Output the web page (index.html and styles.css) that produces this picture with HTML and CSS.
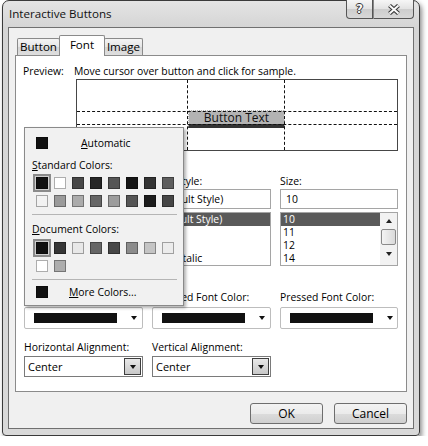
FILE: index.html
```html
<!DOCTYPE html>
<html>
<head>
<meta charset="utf-8">
<title>Interactive Buttons</title>
<link rel="stylesheet" href="styles.css">
</head>
<body>
<div class="window">
  <div class="titlebar">
    <div class="title">Interactive Buttons</div>
    <div class="caps">
      <div class="cap help"><span class="qmark">?</span></div>
      <div class="cap close">
        <svg width="14" height="11" viewBox="0 0 14 11"><path d="M2.5 1.5 L11.5 9.5 M11.5 1.5 L2.5 9.5" stroke="#3a3a3a" stroke-width="4.2" fill="none"/><path d="M2.5 1.5 L11.5 9.5 M11.5 1.5 L2.5 9.5" stroke="#fafafa" stroke-width="2" fill="none"/></svg>
      </div>
    </div>
  </div>
  <div class="client">
    <div class="tabs">
      <div class="tab t-button">Button</div>
      <div class="tab t-font active">Font</div>
      <div class="tab t-image">Image</div>
    </div>
    <div class="panel">
      <div class="preview">
        <div class="pv-label">Preview:</div>
        <div class="pv-hint">Move cursor over button and click for sample.</div>
        <div></div>
        <div class="pv-box">
          <div class="sample">Button Text</div>
          <div class="vline v1"></div>
          <div class="vline v2"></div>
          <div class="hline h1"></div>
          <div class="hline h2"></div>
        </div>
      </div>

      <div class="fields fonts">
        <div class="field">
          <div class="lbl"></div>
          <div class="input"></div>
          <div class="list"></div>
        </div>
        <div class="field">
          <div class="lbl">Font Style:</div>
          <div class="input">(Default Style)</div>
          <div class="list">
            <div class="item sel">(Default Style)</div>
            <div class="item">Bold</div>
            <div class="item">Italic</div>
            <div class="item">Bold Italic</div>
          </div>
        </div>
        <div class="field">
          <div class="lbl">Size:</div>
          <div class="input size-in">10</div>
          <div class="list with-scroll">
            <div class="items">
              <div class="item sel">10</div>
              <div class="item">11</div>
              <div class="item">12</div>
              <div class="item">14</div>
            </div>
            <div class="scroll">
              <div class="sb-arrow up"></div>
              <div class="sb-thumb"></div>
              <div class="sb-arrow down"></div>
            </div>
          </div>
        </div>
      </div>

      <div class="fields colors">
        <div class="field">
          <div class="lbl"></div>
          <div class="cdrop"><span class="bar"></span><span class="arrow"></span></div>
        </div>
        <div class="field">
          <div class="lbl">Hovered Font Color:</div>
          <div class="cdrop"><span class="bar"></span><span class="arrow"></span></div>
        </div>
        <div class="field">
          <div class="lbl">Pressed Font Color:</div>
          <div class="cdrop"><span class="bar"></span><span class="arrow"></span></div>
        </div>
      </div>

      <div class="fields aligns">
        <div class="field">
          <div class="lbl">Horizontal Alignment:</div>
          <div class="select"><span>Center</span><span class="dbtn"><span class="arrow"></span></span></div>
        </div>
        <div class="field">
          <div class="lbl">Vertical Alignment:</div>
          <div class="select"><span>Center</span><span class="dbtn"><span class="arrow"></span></span></div>
        </div>
      </div>

      <div class="popup">
        <div class="auto"><span class="sw" style="background:#111"></span><span class="auto-text"><span class="ul">A</span>utomatic</span></div>
        <div class="plabel"><span class="ul">S</span>tandard Colors:</div>
        <div class="swatches">
          <span class="sw selected" style="background:#111"></span>
          <span class="sw" style="background:#fff"></span>
          <span class="sw" style="background:#474747"></span>
          <span class="sw" style="background:#262626"></span>
          <span class="sw" style="background:#555"></span>
          <span class="sw" style="background:#151515"></span>
          <span class="sw" style="background:#333"></span>
          <span class="sw" style="background:#5e5e5e"></span>
          <span class="sw" style="background:#f2f2f2"></span>
          <span class="sw" style="background:#9a9a9a"></span>
          <span class="sw" style="background:#ababab"></span>
          <span class="sw" style="background:#666"></span>
          <span class="sw" style="background:#9c9c9c"></span>
          <span class="sw" style="background:#555"></span>
          <span class="sw" style="background:#1c1c1c"></span>
          <span class="sw" style="background:#464646"></span>
        </div>
        <div class="sep"></div>
        <div class="plabel"><span class="ul">D</span>ocument Colors:</div>
        <div class="swatches doc">
          <span class="sw selected" style="background:#111"></span>
          <span class="sw" style="background:#363636"></span>
          <span class="sw" style="background:#e8e8e8"></span>
          <span class="sw" style="background:#666"></span>
          <span class="sw" style="background:#474747"></span>
          <span class="sw" style="background:#8c8c8c"></span>
          <span class="sw" style="background:#c4c4c4"></span>
          <span class="sw" style="background:#ececec"></span>
          <span class="sw" style="background:#fff"></span>
          <span class="sw" style="background:#adadad"></span>
        </div>
        <div class="sep"></div>
        <div class="more"><span class="sw" style="background:#111"></span><span class="more-text"><span class="ul">M</span>ore Colors...</span></div>
      </div>
    </div>
    <div class="buttons">
      <div class="btn">OK</div>
      <div class="btn">Cancel</div>
    </div>
  </div>
</div>
</body>
</html>
```

FILE: styles.css
```css
* { box-sizing: border-box; }
html, body { margin: 0; padding: 0; background: #fff; }
body {
  font-family: "Open Sans", "Noto Sans", sans-serif;
  font-size: 10.4px;
  color: #000;
  padding-left: 2px;
}

.window {
  width: 418px;
  border: 1px solid #3a3a3a;
  border-radius: 7px 7px 4px 4px;
  background: linear-gradient(#e4e4e4, #d5d5d5 26px, #d9d9d9);
  padding: 0 5px 6px;
  box-shadow: 2px 3px 5px rgba(0,0,0,0.45);
}

.titlebar {
  height: 26px;
  display: flex;
  align-items: flex-start;
}
.title {
  flex: 1;
  font-size: 11.6px;
  line-height: 16px;
  padding: 5px 0 0 1px;
  color: #111;
}
.caps { display: flex; margin-top: -1px; }
.cap {
  height: 19px;
  border: 1px solid #555;
  border-top: none;
  background: linear-gradient(#f6f6f6, #e2e2e2 50%, #cdcdcd 51%, #d8d8d8);
  display: flex;
  align-items: center;
  justify-content: center;
}
.cap.help { width: 27px; border-radius: 0 0 0 4px; }
.cap.close { width: 41px; border-left: 1px solid #888; border-radius: 0 0 4px 0; }
.qmark {
  font-family: "DejaVu Sans", sans-serif;
  font-weight: bold;
  font-size: 12px;
  line-height: 12px;
  color: #fafafa;
  text-shadow: 1px 0 0 #333, -1px 0 0 #333, 0 1px 0 #333, 0 -1px 0 #333;
}

.client {
  border: 1px solid #707070;
  background: #f0f0f0;
  padding: 7px 6px 4px;
}

.tabs {
  display: flex;
  align-items: flex-end;
  height: 20px;
  padding-left: 2px;
  position: relative;
  z-index: 2;
}
.tab {
  height: 17px;
  border: 1px solid #8a8a8a;
  border-bottom: none;
  border-radius: 2px 2px 0 0;
  background: linear-gradient(#f4f4f4, #e6e6e6 50%, #d6d6d6 51%, #dedede);
  font-size: 11.6px;
  line-height: 16px;
  text-align: center;
}
.t-button { width: 43px; }
.t-font { width: 46px; margin-left: -1px; }
.t-image { width: 39px; margin-left: -1px; }
.tab.active {
  height: 21px;
  margin-bottom: -1px;
  background: #fff;
  line-height: 18px;
  position: relative;
  z-index: 3;
}

.panel {
  position: relative;
  height: 337px;
  border: 1px solid #8b8b8b;
  background: #fff;
  padding: 8px 7px 0 8px;
}

.preview {
  display: grid;
  grid-template-columns: 50px 324px;
}
.pv-label, .pv-hint { line-height: 15px; white-space: nowrap; }
.pv-label { margin-left: -1px; }
.pv-box {
  position: relative;
  margin-left: 2px;
  width: 322px;
  height: 72px;
  border: 1px solid #464646;
  background: #fff;
}
.sample {
  position: absolute;
  left: 111px;
  top: 30px;
  width: 97px;
  height: 18px;
  background: #b3b3b3;
  border: 1px dotted #f4f4f4;
  border-bottom: 4px solid #333;
  font-size: 12px;
  line-height: 13px;
  text-align: center;
  color: #111;
}
.vline {
  position: absolute;
  top: 0;
  bottom: 0;
  width: 0;
  border-left: 1px dashed #111;
}
.v1 { left: 110px; }
.v2 { left: 207px; }
.hline {
  position: absolute;
  left: 0;
  right: 0;
  height: 0;
  border-top: 1px dashed #111;
}
.h1 { top: 31px; }
.h2 { top: 44px; }

.fields {
  display: grid;
  grid-template-columns: 119px 119px 118px;
  column-gap: 9px;
}
.fonts { margin-top: 23px; }
.colors { margin-top: 24px; }
.aligns { margin-top: 11px; grid-template-columns: 119px 119px; }

.lbl { height: 15px; line-height: 15px; white-space: nowrap; }
.input {
  height: 20px;
  border: 1px solid #a5a5a5;
  line-height: 18px;
  padding-left: 3px;
  white-space: nowrap;
  overflow: hidden;
}
.size-in { padding-left: 5px; }
.list {
  margin-top: 3px;
  height: 54px;
  border: 1px solid #a5a5a5;
  overflow: hidden;
}
.item {
  height: 13px;
  line-height: 13px;
  padding-left: 2px;
  white-space: nowrap;
}
.item.sel { background: #5a5a5a; color: #fff; }
.with-scroll { display: flex; }
.items { flex: 1; }
.scroll {
  width: 17px;
  display: flex;
  flex-direction: column;
  align-items: center;
  background: #f2f2f2;
}
.sb-arrow {
  width: 0;
  height: 0;
  border-left: 3.5px solid transparent;
  border-right: 3.5px solid transparent;
}
.sb-arrow.up { border-bottom: 4px solid #222; margin-top: 6px; }
.sb-arrow.down { border-top: 4px solid #222; margin-top: 7px; }
.sb-thumb {
  width: 15px;
  height: 16px;
  margin-top: 6px;
  border: 1px solid #8a8a8a;
  border-radius: 2px;
  background: linear-gradient(90deg, #f4f4f4, #dadada);
}

.fields.colors .lbl { margin-bottom: 2px; }
.cdrop {
  height: 22px;
  border: 1px solid #bdbdbd;
  border-radius: 2px;
  display: flex;
  align-items: center;
  padding-left: 9px;
}
.cdrop .bar {
  width: 83px;
  height: 10px;
  background: #111;
}
.arrow {
  width: 0;
  height: 0;
  border-left: 3.5px solid transparent;
  border-right: 3.5px solid transparent;
  border-top: 4px solid #111;
}
.cdrop .arrow { margin-left: 14px; }

.fields.aligns .lbl { margin-bottom: 1px; }
.select {
  height: 21px;
  border: 1px solid #7a7a7a;
  display: flex;
  align-items: center;
  justify-content: space-between;
  padding: 0 1px 0 3px;
  font-size: 11px;
}
.dbtn {
  width: 17px;
  height: 17px;
  border: 1px solid #3e3e3e;
  background: linear-gradient(#e8e8e8, #c8c8c8);
  display: flex;
  align-items: center;
  justify-content: center;
}

.popup {
  position: absolute;
  left: 8px;
  top: 71px;
  width: 160px;
  height: 179px;
  background: #f1f1f1;
  border: 1px solid #8a8a8a;
  box-shadow: 2px 2px 3px rgba(0,0,0,0.3);
  z-index: 5;
}
.ul { text-decoration: underline; }
.sw {
  display: block;
  width: 12px;
  height: 12px;
  border: 1px solid rgba(0,0,0,0.32);
}
.sw.selected {
  box-shadow: 0 0 0 1px #cfcfcf, 0 0 0 3px #8a8a8a;
}
.auto, .more {
  display: flex;
  align-items: center;
  height: 12px;
  padding-left: 11px;
  white-space: nowrap;
}
.auto { margin-top: 9px; }
.auto-text { margin-left: 33px; }
.more { margin-top: 6px; }
.more-text { margin-left: 21px; }
.plabel {
  margin-top: 9px;
  padding-left: 7px;
  line-height: 14px;
  white-space: nowrap;
}
.sep + .plabel { margin-top: 7px; }
.swatches {
  display: grid;
  grid-template-columns: repeat(8, 12px);
  column-gap: 6px;
  row-gap: 6px;
  padding-left: 11px;
  margin-top: 5px;
}
.swatches.doc { margin-top: 6px; }
.sep {
  margin: 7px 6px 0 7px;
  border-top: 1px solid #b5b5b5;
}

.buttons {
  display: flex;
  justify-content: flex-end;
  gap: 11px;
  margin-top: 11px;
}
.btn {
  width: 73px;
  height: 21px;
  border: 1px solid #6e6e6e;
  border-radius: 3px;
  background: linear-gradient(#f3f3f3, #ebebeb 50%, #dcdcdc 51%, #cfcfcf);
  font-size: 12px;
  line-height: 19px;
  text-align: center;
}
```
